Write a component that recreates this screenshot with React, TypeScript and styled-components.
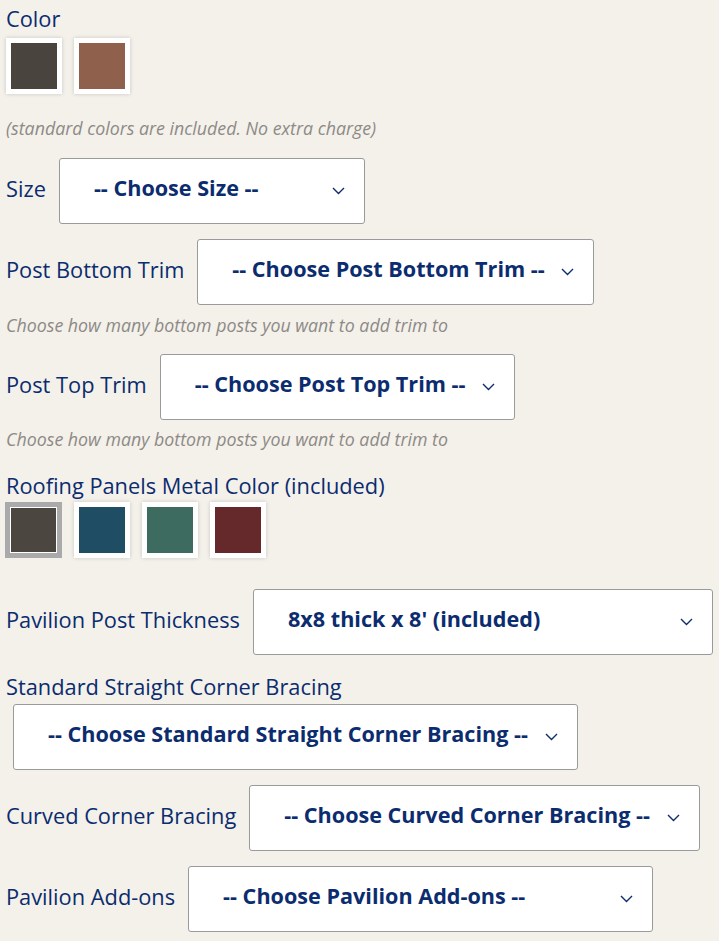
import React from 'react';
import styled, { createGlobalStyle } from 'styled-components';

const colors = {
  page: '#f4f1eb',
  navy: '#0b2c6e',
  hint: '#8d8a86',
  border: '#9a9a9a',
};

const GlobalStyle = createGlobalStyle`
  html, body {
    margin: 0;
    padding: 0;
    background: ${colors.page};
  }
  body {
    font-family: 'Open Sans', 'Noto Sans', sans-serif;
    color: ${colors.navy};
  }
`;

const Page = styled.div`
  padding: 4px 0 0 6px;
  width: 719px;
  min-height: 941px;
  box-sizing: border-box;
`;

const Label = styled.div`
  font-size: 21.8px;
  line-height: 30px;
  white-space: nowrap;
`;

const RowLabel = styled(Label)`
  padding-bottom: 4px;
`;

const SwatchRow = styled.div<{ $top: number }>`
  display: flex;
  gap: 12px;
  margin-top: ${({ $top }) => $top}px;
`;

const Swatch = styled.div<{ $selected?: boolean }>`
  height: 56px;
  box-sizing: border-box;
  border: 5px solid ${({ $selected }) => ($selected ? '#aaaaaa' : '#ffffff')};
  box-shadow: ${({ $selected }) => ($selected ? 'none' : '0 0 4px rgba(0, 0, 0, 0.18)')};
  margin-left: ${({ $selected }) => ($selected ? '-1px' : '0')};
  width: ${({ $selected }) => ($selected ? '57px' : '56px')};
`;

const Fill = styled.div<{ $color: string; $selected?: boolean }>`
  width: 100%;
  height: 100%;
  box-sizing: border-box;
  background: ${({ $color }) => $color};
  border: ${({ $selected }) => ($selected ? '1px solid #ffffff' : 'none')};
`;

const Note = styled.div<{ $top?: number }>`
  font-style: italic;
  font-size: 17.8px;
  line-height: 22px;
  color: ${colors.hint};
  margin-top: ${({ $top }) => $top ?? 0}px;
  white-space: nowrap;
`;

const Row = styled.div<{ $top: number }>`
  display: flex;
  align-items: center;
  gap: 13px;
  margin-top: ${({ $top }) => $top}px;
`;

const SelectBox = styled.div<{ $width: number }>`
  display: flex;
  align-items: center;
  width: ${({ $width }) => $width}px;
  height: 66px;
  box-sizing: border-box;
  padding: 0 19px 0 34px;
  background: #ffffff;
  border: 1px solid ${colors.border};
  border-radius: 3px;
`;

const SelectText = styled.span`
  flex: 1;
  font-weight: 700;
  font-size: 21.6px;
  color: ${colors.navy};
  white-space: nowrap;
  padding-bottom: 7px;
`;

const Chevron = () => (
  <svg width="13" height="8" viewBox="0 0 13 8" fill="none">
    <path d="M1 1l5.5 5.5L12 1" stroke={colors.navy} strokeWidth="1.4" />
  </svg>
);

type SelectProps = { text: string; width: number };

function Select({ text, width }: SelectProps) {
  return (
    <SelectBox $width={width}>
      <SelectText>{text}</SelectText>
      <Chevron />
    </SelectBox>
  );
}

const StackedSelect = styled.div`
  margin: 2px 0 0 7px;
`;

const Heading = styled(Label)<{ $top: number }>`
  margin-top: ${({ $top }) => $top}px;
`;

export default function App() {
  return (
    <Page>
      <GlobalStyle />
      <Label>Color</Label>
      <SwatchRow $top={4}>
        <Swatch>
          <Fill $color="#4a443e" />
        </Swatch>
        <Swatch>
          <Fill $color="#8f604c" />
        </Swatch>
      </SwatchRow>
      <Note $top={23}>(standard colors are included. No extra charge)</Note>

      <Row $top={19}>
        <RowLabel>Size</RowLabel>
        <Select text="-- Choose Size --" width={306} />
      </Row>
      <Row $top={15}>
        <RowLabel>Post Bottom Trim</RowLabel>
        <Select text="-- Choose Post Bottom Trim --" width={397} />
      </Row>
      <Note $top={9}>Choose how many bottom posts you want to add trim to</Note>
      <Row $top={18}>
        <RowLabel>Post Top Trim</RowLabel>
        <Select text="-- Choose Post Top Trim --" width={355} />
      </Row>
      <Note $top={8}>Choose how many bottom posts you want to add trim to</Note>

      <Heading $top={21}>Roofing Panels Metal Color (included)</Heading>
      <SwatchRow $top={1}>
        <Swatch $selected>
          <Fill $color="#4b4640" $selected />
        </Swatch>
        <Swatch>
          <Fill $color="#1f4d63" />
        </Swatch>
        <Swatch>
          <Fill $color="#3e6b5f" />
        </Swatch>
        <Swatch>
          <Fill $color="#66292b" />
        </Swatch>
      </SwatchRow>

      <Row $top={31}>
        <RowLabel>Pavilion Post Thickness</RowLabel>
        <Select text="8x8 thick x 8' (included)" width={460} />
      </Row>
      <Heading $top={17}>Standard Straight Corner Bracing</Heading>
      <StackedSelect>
        <Select text="-- Choose Standard Straight Corner Bracing --" width={565} />
      </StackedSelect>
      <Row $top={15}>
        <RowLabel>Curved Corner Bracing</RowLabel>
        <Select text="-- Choose Curved Corner Bracing --" width={451} />
      </Row>
      <Row $top={15}>
        <RowLabel>Pavilion Add-ons</RowLabel>
        <Select text="-- Choose Pavilion Add-ons --" width={465} />
      </Row>
    </Page>
  );
}
